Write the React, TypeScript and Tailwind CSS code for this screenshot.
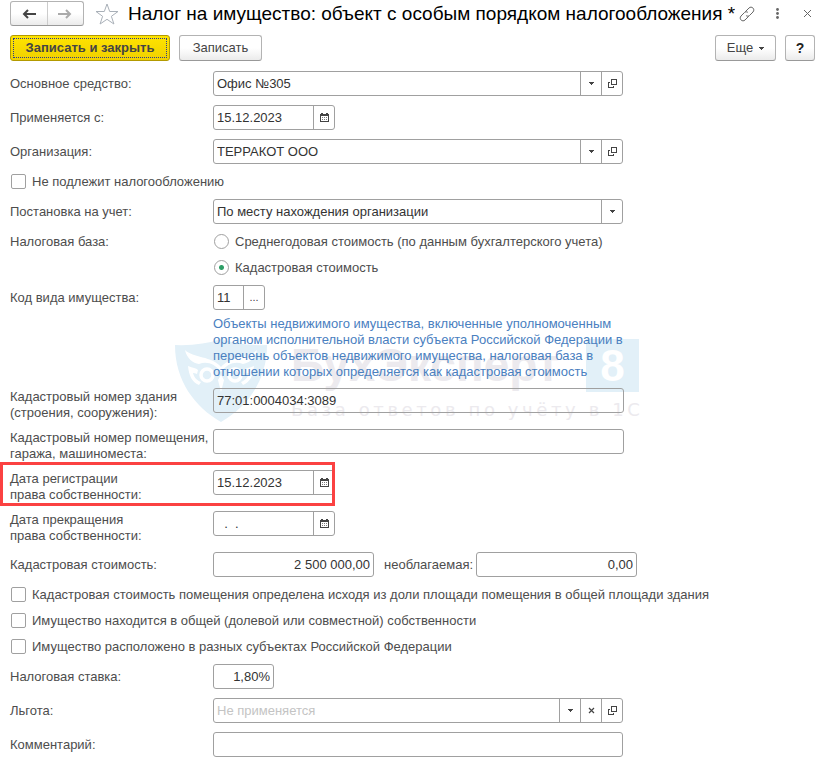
import React from 'react';

const fieldBox = 'flex h-[25px] rounded-[3px] border border-[#a0a0a0] overflow-hidden';
const fieldInput = 'min-w-0 flex-1 bg-transparent px-[3px] text-[#333333] outline-none placeholder:text-[#c4c4c4]';
const fieldButton = 'flex w-[21px] shrink-0 items-center justify-center border-l border-[#a0a0a0] text-[#444444]';
const greyButton =
  'flex h-[26px] items-center justify-center rounded-[3px] border border-[#b3b3b3] border-b-[#999999] bg-linear-to-b from-white from-50% to-[#ebebeb] text-[#444444]';

function CaretIcon() {
  return (
    <svg width="5" height="3" viewBox="0 0 5 3" fill="currentColor" shapeRendering="crispEdges">
      <path d="M0 0h5v1H4v1H3v1H2V2H1V1H0z" />
    </svg>
  );
}

function OpenIcon() {
  return (
    <svg width="9" height="9" viewBox="0 0 9 9" fill="none" stroke="currentColor" shapeRendering="crispEdges">
      <path d="M3.5 0.5h5v5h-5z" />
      <path d="M2 3.5H0.5v5h5V7" />
    </svg>
  );
}

function CalendarIcon() {
  return (
    <svg width="9" height="9" viewBox="0 0 9 9" fill="currentColor" shapeRendering="crispEdges">
      <path d="M0 1h1V0h2v1h3V0h2v1h1v8H0zM1 3v5h7V3z" fillRule="evenodd" />
      <path d="M2 4h1v1H2zM4 4h1v1H4zM6 4h1v1H6zM2 6h1v1H2zM4 6h1v1H4zM6 6h1v1H6z" opacity="0.7" />
    </svg>
  );
}

function ClearIcon() {
  return (
    <svg width="7" height="7" viewBox="0 0 7 7" fill="none" stroke="currentColor" strokeWidth="1.2">
      <path d="M1 1l5 5M6 1L1 6" />
    </svg>
  );
}

function Row({ label, id, tall, children }: { label: React.ReactNode; id?: string; tall?: boolean; children: React.ReactNode }) {
  return (
    <div className={tall ? 'flex h-8 items-start' : 'flex items-center'}>
      <label htmlFor={id} className={`w-[203px] shrink-0 leading-4 ${tall ? 'pt-px' : ''}`}>
        {label}
      </label>
      <div className="min-w-0 flex-1">{children}</div>
    </div>
  );
}

function LookupField({ id, value, placeholder, clearable }: { id: string; value?: string; placeholder?: string; clearable?: boolean }) {
  return (
    <div className={`${fieldBox} max-w-[410px]`}>
      <input id={id} type="text" defaultValue={value} placeholder={placeholder} className={fieldInput} />
      <button type="button" aria-label="Выбрать" className={fieldButton}>
        <CaretIcon />
      </button>
      {clearable && (
        <button type="button" aria-label="Очистить" className={fieldButton}>
          <ClearIcon />
        </button>
      )}
      <button type="button" aria-label="Открыть" className={fieldButton}>
        <OpenIcon />
      </button>
    </div>
  );
}

function DateField({ id, value }: { id: string; value: string }) {
  return (
    <div className={`${fieldBox} w-[122px]`}>
      <input id={id} type="text" defaultValue={value} className={fieldInput} />
      <button type="button" aria-label="Календарь" className={fieldButton}>
        <CalendarIcon />
      </button>
    </div>
  );
}

function Check({ label }: { label: string }) {
  return (
    <label className="flex min-h-[17px] items-center gap-1.5 pl-px leading-4">
      <input type="checkbox" className="size-[15px] shrink-0 appearance-none rounded-[2px] border border-[#a0a0a0] bg-white checked:bg-[#2e9e66]" />
      {label}
    </label>
  );
}

function Radio({ label, checked }: { label: string; checked?: boolean }) {
  return (
    <label className="flex min-h-[17px] items-center gap-1.5 pl-px leading-4">
      <input
        type="radio"
        name="base"
        defaultChecked={checked}
        className="size-[15px] shrink-0 appearance-none rounded-full border border-[#a0a0a0] bg-white checked:bg-[radial-gradient(circle,#2e9e66_2px,transparent_3px)]"
      />
      {label}
    </label>
  );
}

function Watermark() {
  return (
    <div aria-hidden="true" className="pointer-events-none absolute top-6 -left-[38px] -z-10 flex w-[464px] items-start">
      <svg width="92" height="84" viewBox="0 0 92 84" className="shrink-0">
        <path d="M0 6Q26 7 46 0Q66 7 92 6C92 42 72 68 46 83C20 68 0 42 0 6z" fill="#e2f0f8" />
        <g fill="#ffffff">
          <path d="M10 11C18 19 37 17 46 28C55 17 74 19 82 11C80 20 74 24 68 25C60 22 52 25 46 33C40 25 32 22 24 25C18 24 12 20 10 11z" />
          <path d="M13 27C18 29 21 29 23 31L22 35C20 34 19 34 18 34C19 38 21 41 26 43L24 46C17 43 14 37 13 27z" />
          <path d="M79 27C74 29 71 29 69 31L70 35C72 34 73 34 74 34C73 38 71 41 66 43L68 46C75 43 78 37 79 27z" />
          <path d="M46 36l3 5-3 12-3-12z" />
        </g>
        <g fill="none" stroke="#ffffff" strokeWidth="3.5">
          <circle cx="32" cy="36" r="6" />
          <circle cx="60" cy="36" r="6" />
        </g>
      </svg>
      <div className="ml-6 min-w-0 flex-1 text-[#eceaee]">
        <div className="flex h-[53px] items-center justify-between font-bold">
          <span className="text-[46px]">БухЭксперт</span>
          <span className="flex size-[53px] items-center justify-center bg-[#e2f0f8] text-[44px] text-white">8</span>
        </div>
        <div className="mt-1.5 font-['DejaVu_Sans',sans-serif] text-[18px] leading-6 tracking-[0.2em] whitespace-nowrap">
          База ответов по учёту в 1С
        </div>
      </div>
    </div>
  );
}

export default function App() {
  return (
    <main className="isolate min-h-screen bg-white pb-1 font-['Liberation_Sans',Arial,sans-serif] text-[13px] text-[#4d4d4d]">
      <header className="flex h-[27px] items-center pr-[3px] pl-2.5">
        <div className="flex h-[25px] w-[74px] shrink-0 rounded-[3px] border border-[#b3b3b3] border-b-[#999999] bg-linear-to-b from-white from-50% to-[#ebebeb]">
          <button type="button" aria-label="Назад" className="flex flex-1 items-center justify-center border-r border-[#cccccc] text-[#444444]">
            <svg width="14" height="10" viewBox="0 0 14 10" fill="none" stroke="currentColor" strokeWidth="2">
              <path d="M14 5H2M6 1L2 5l4 4" />
            </svg>
          </button>
          <button type="button" aria-label="Вперед" className="flex flex-1 items-center justify-center text-[#aaaaaa]">
            <svg width="14" height="10" viewBox="0 0 14 10" fill="none" stroke="currentColor" strokeWidth="2">
              <path d="M0 5h12M8 1l4 4-4 4" />
            </svg>
          </button>
        </div>
        <button type="button" aria-label="В избранное" className="ml-[11px] shrink-0 text-[#a9b0b8]">
          <svg width="24" height="22" viewBox="0 0 24 22" fill="none" stroke="currentColor">
            <path d="M12 1l2.700 7.500H23l-6.600 4.800 2.500 7.700-6.900-4.700L5.100 21l2.500-7.700L1 8.500h8.300z" />
          </svg>
        </button>
        <h1 className="ml-[9px] min-w-0 truncate text-[19px] leading-6 text-black">
          Налог на имущество: объект с особым порядком налогообложения *
        </h1>
        <div className="ml-auto flex shrink-0 items-center text-[#666666]">
          <button type="button" aria-label="Получить ссылку">
            <svg width="16" height="16" viewBox="0 0 16 16" fill="none" stroke="currentColor" strokeLinecap="round">
              <path d="M6.500 5.500l3.500-3.500c2.500-2.500 6.500 1 4 4l-3.500 3.500c-.8.800-2 .9-3 .4M9.500 10.500L6 14c-2.500 2.500-6.500-1-4-4l3.500-3.500c.8-.8 2-.9 3-.4" />
            </svg>
          </button>
          <button type="button" aria-label="Меню" className="ml-[21px]">
            <svg width="3" height="11" viewBox="0 0 3 11" fill="currentColor">
              <circle cx="1.5" cy="1.5" r="1.4" />
              <circle cx="1.5" cy="5.5" r="1.4" />
              <circle cx="1.5" cy="9.5" r="1.4" />
            </svg>
          </button>
          <button type="button" aria-label="Закрыть" className="ml-6">
            <svg width="9" height="9" viewBox="0 0 9 9" fill="none" stroke="currentColor">
              <path d="M1 1l7 7M8 1L1 8" />
            </svg>
          </button>
        </div>
      </header>

      <div className="mt-2 flex items-center pl-2.5">
        <button
          type="button"
          className="flex h-[26px] w-40 items-center justify-center rounded-[3px] border border-[#b39a00] bg-linear-to-b from-[#ffe400] to-[#f0d000] p-0.5 font-bold text-[#444444]"
        >
          <span className="flex size-full items-center justify-center border border-dotted border-[#2b3a8c]">Записать и закрыть</span>
        </button>
        <button type="button" className={`${greyButton} ml-[9px] w-[83px]`}>
          Записать
        </button>
        <button type="button" className={`${greyButton} ml-auto w-[61px] gap-1.5`}>
          Еще
          <CaretIcon />
        </button>
        <button type="button" className={`${greyButton} ml-[9px] w-[30px]`}>
          <span className="text-[14px] font-bold text-[#222222]">?</span>
        </button>
      </div>

      <form className="mt-2.5 flex flex-col gap-[9px] px-2.5">
        <Row label="Основное средство:" id="asset">
          <LookupField id="asset" value="Офис №305" />
        </Row>
        <Row label="Применяется с:" id="from">
          <DateField id="from" value="15.12.2023" />
        </Row>
        <Row label="Организация:" id="org">
          <LookupField id="org" value="ТЕРРАКОТ ООО" />
        </Row>
        <Check label="Не подлежит налогообложению" />
        <Row label="Постановка на учет:" id="place">
          <div className={`${fieldBox} max-w-[410px]`}>
            <select id="place" className="min-w-0 flex-1 appearance-none bg-transparent px-[3px] text-[#333333] outline-none">
              <option>По месту нахождения организации</option>
            </select>
            <span className={`${fieldButton} pointer-events-none`}>
              <CaretIcon />
            </span>
          </div>
        </Row>
        <div role="radiogroup" aria-labelledby="base-label" className="flex items-start">
          <span id="base-label" className="w-[203px] shrink-0 pt-px leading-4">
            Налоговая база:
          </span>
          <div className="flex flex-col gap-[9px]">
            <Radio label="Среднегодовая стоимость (по данным бухгалтерского учета)" />
            <Radio label="Кадастровая стоимость" checked />
          </div>
        </div>
        <Row label="Код вида имущества:" id="code">
          <div className={`${fieldBox} w-[52px]`}>
            <input id="code" type="text" defaultValue="11" className={fieldInput} />
            <button type="button" aria-label="Выбрать код" className={`${fieldButton} text-[11px]`}>
              ...
            </button>
          </div>
        </Row>
        <div className="relative -my-1 ml-[203px] max-w-[410px] pt-px pb-[3px]">
          <p className="leading-4 text-[#4a80bf]">
            Объекты недвижимого имущества, включенные уполномоченным органом исполнительной власти субъекта Российской Федерации в
            перечень объектов недвижимого имущества, налоговая база в отношении которых определяется как кадастровая стоимость
          </p>
          <Watermark />
        </div>
        <Row tall label={<>Кадастровый номер здания<br />(строения, сооружения):</>} id="building">
          <div className={`${fieldBox} max-w-[411px]`}>
            <input id="building" type="text" defaultValue="77:01:0004034:3089" className={fieldInput} />
          </div>
        </Row>
        <Row tall label={<>Кадастровый номер помещения,<br />гаража, машиноместа:</>} id="room">
          <div className={`${fieldBox} max-w-[411px]`}>
            <input id="room" type="text" className={fieldInput} />
          </div>
        </Row>
        <div className="relative">
          <Row tall label={<>Дата регистрации<br />права собственности:</>} id="reg">
            <DateField id="reg" value="15.12.2023" />
          </Row>
          <div className="pointer-events-none absolute -top-2 -bottom-1 -left-2.5 w-[335px] border-3 border-[#fb4141]" />
        </div>
        <Row tall label={<>Дата прекращения<br />права собственности:</>} id="end">
          <DateField id="end" value="  .  ." />
        </Row>
        <Row label="Кадастровая стоимость:" id="cost">
          <div className="flex items-center">
            <div className={`${fieldBox} w-[161px]`}>
              <input id="cost" type="text" defaultValue="2 500 000,00" className={`${fieldInput} text-right`} />
            </div>
            <label htmlFor="free" className="ml-2.5">
              необлагаемая:
            </label>
            <div className={`${fieldBox} ml-[3px] w-[161px]`}>
              <input id="free" type="text" defaultValue="0,00" className={`${fieldInput} text-right`} />
            </div>
          </div>
        </Row>
        <Check label="Кадастровая стоимость помещения определена исходя из доли площади помещения в общей площади здания" />
        <Check label="Имущество находится в общей (долевой или совместной) собственности" />
        <Check label="Имущество расположено в разных субъектах Российской Федерации" />
        <Row label="Налоговая ставка:" id="rate">
          <div className={`${fieldBox} w-[61px]`}>
            <input id="rate" type="text" defaultValue="1,80%" className={`${fieldInput} text-right`} />
          </div>
        </Row>
        <Row label="Льгота:" id="benefit">
          <LookupField id="benefit" placeholder="Не применяется" clearable />
        </Row>
        <Row label="Комментарий:" id="comment">
          <div className={`${fieldBox} max-w-[410px]`}>
            <input id="comment" type="text" className={fieldInput} />
          </div>
        </Row>
      </form>
    </main>
  );
}
